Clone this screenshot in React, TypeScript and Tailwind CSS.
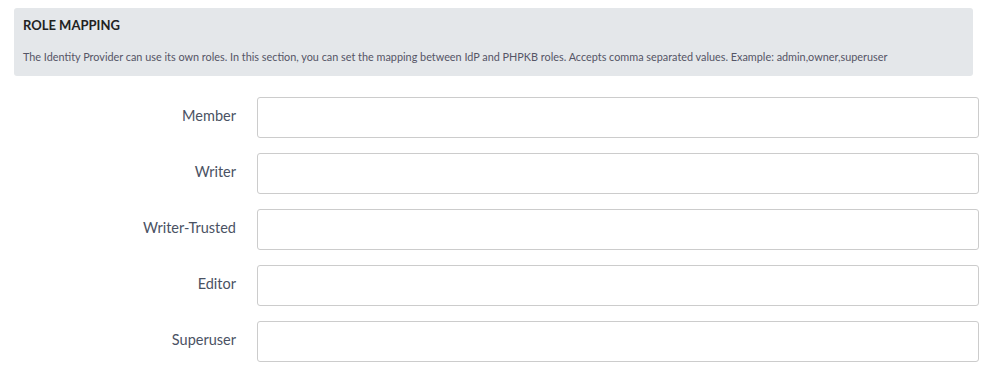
export default function App() {
  const roles = ['Member', 'Writer', 'Writer-Trusted', 'Editor', 'Superuser']

  return (
    <div className="w-[987px] h-[371px] bg-white font-['Lato',sans-serif] pt-2">
      {/* Section header */}
      <div className="mx-[14px] h-[68px] rounded-[3px] bg-[#e4e7ea] px-[9px] pt-[9px]">
        <h3 className="text-[13px] font-bold leading-4 text-[#222]">ROLE MAPPING</h3>
        <p className="mt-[16px] text-[10.85px] leading-4 text-[#556]">
          The Identity Provider can use its own roles. In this section, you can set the mapping between IdP and PHPKB
          roles. Accepts comma separated values. Example: admin,owner,superuser
        </p>
      </div>

      {/* Role fields */}
      <div className="mt-[21px] flex flex-col gap-[15px]">
        {roles.map((role) => (
          <div key={role} className="flex items-center">
            <label className="w-[236px] pb-[3px] text-right text-[14.5px] text-[#4a5263]">{role}</label>
            <input
              type="text"
              className="ml-[21px] h-[41px] w-[722px] rounded-[3px] border border-[#ccc] bg-white px-3 text-sm outline-none"
            />
          </div>
        ))}
      </div>
    </div>
  )
}
